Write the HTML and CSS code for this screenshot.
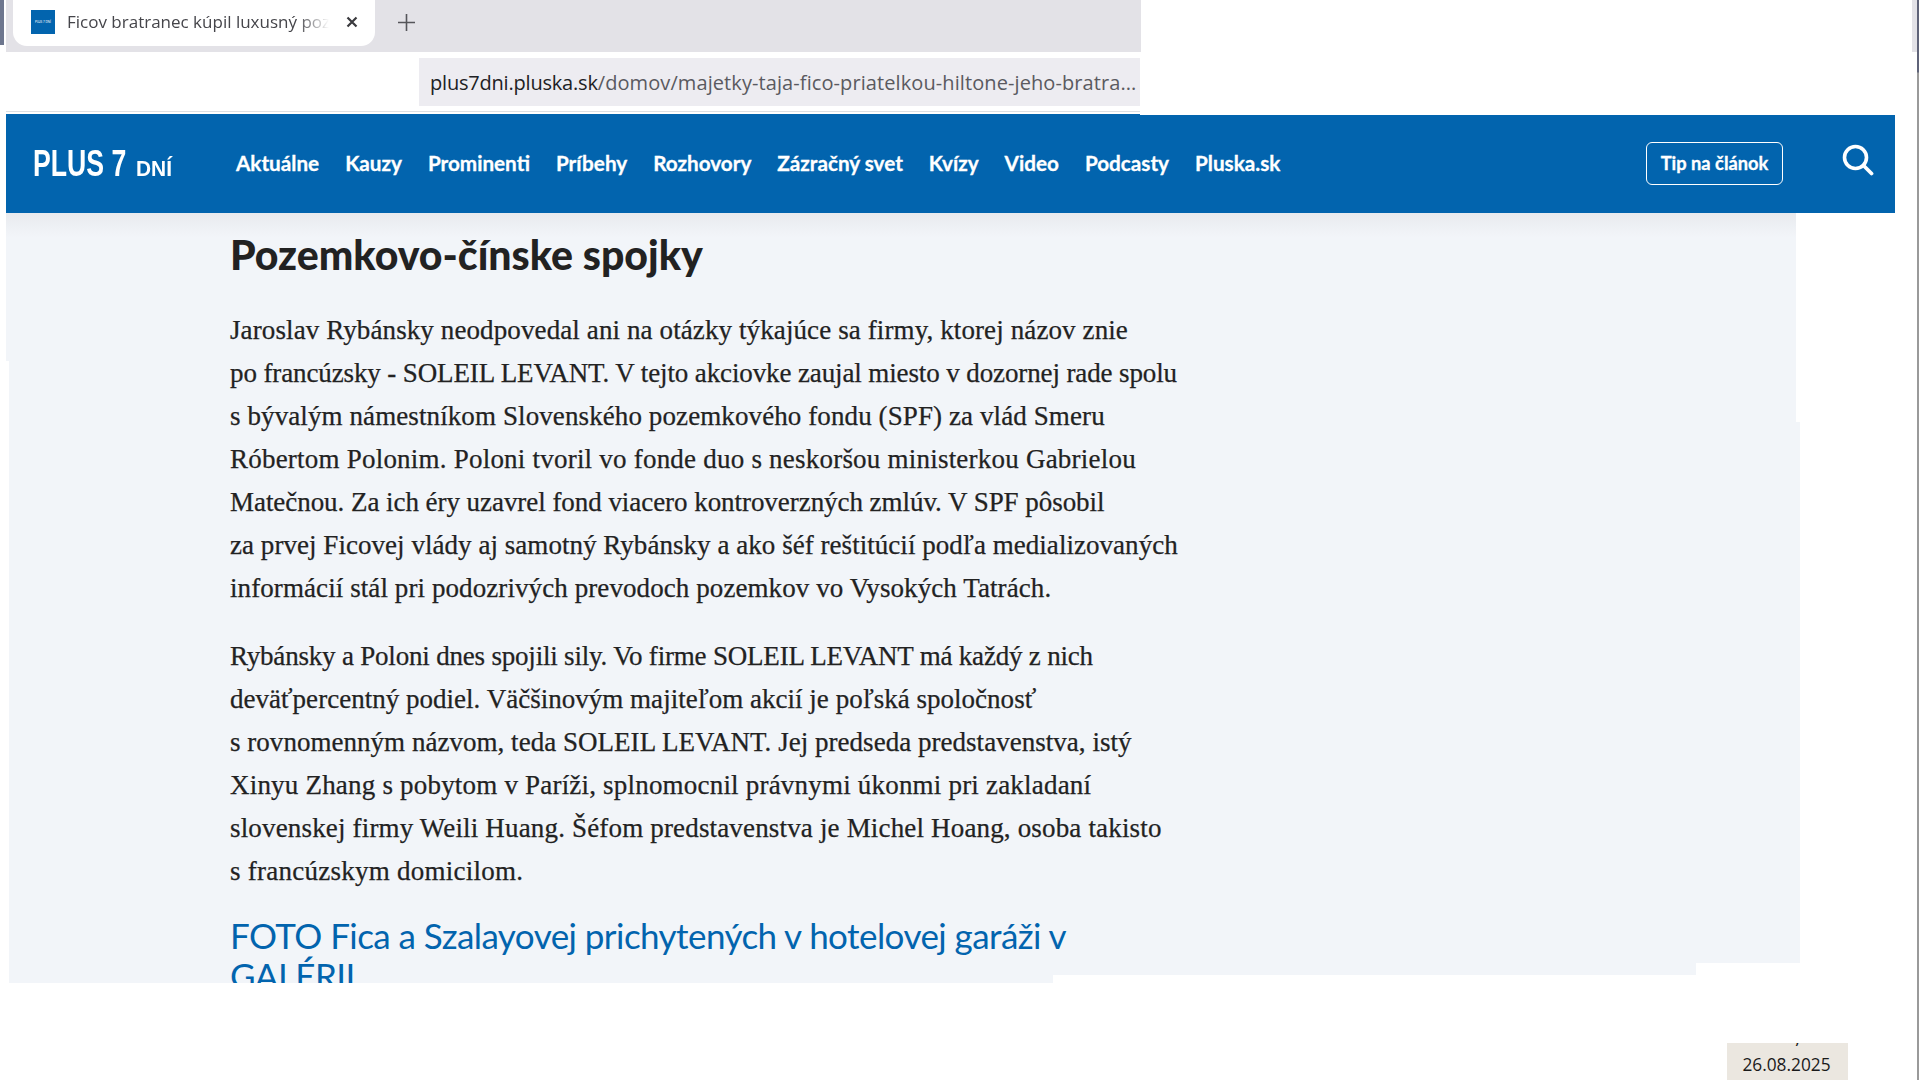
FILE: index.html
```html
<!DOCTYPE html>
<html lang="sk">
<head>
<meta charset="utf-8">
<title>Ficov bratranec kúpil luxusný pozemok</title>
<link rel="stylesheet" href="styles.css">
</head>
<body>
<div class="page">
  <div class="tabstrip">
    <div class="tab">
      <div class="favicon">PLUS 7 DNÍ</div>
      <div class="tab-title">Ficov bratranec kúpil luxusný pozemok</div>
      <svg class="tab-close" width="12" height="12" viewBox="0 0 12 12"><path d="M1.5 1.5l9 9M10.5 1.5l-9 9" fill="none" stroke="#3a3a3e" stroke-width="2.2"/></svg>
    </div>
    <svg class="tab-new" width="17" height="17" viewBox="0 0 17 17"><path d="M8.5 0v17M0 8.5h17" fill="none" stroke="#55555a" stroke-width="1.6"/></svg>
  </div>
  <div class="addressrow">
    <div class="addressbar"><span class="host">plus7dni.pluska.sk</span><span class="path">/domov/majetky-taja-fico-priatelkou-hiltone-jeho-bratra...</span></div>
  </div>
  <header class="siteheader">
    <div class="logo"><span class="logo-main">PLUS 7</span><span class="logo-sub">DNÍ</span></div>
    <nav class="nav">
      <a>Aktuálne</a><a>Kauzy</a><a>Prominenti</a><a>Príbehy</a><a>Rozhovory</a><a>Zázračný svet</a><a>Kvízy</a><a>Video</a><a>Podcasty</a><a>Pluska.sk</a>
    </nav>
    <a class="tip">Tip na článok</a>
    <svg class="search" width="32" height="32" viewBox="0 0 32 32"><circle cx="13.5" cy="13.5" r="11" fill="none" stroke="#fff" stroke-width="3.6"/><path d="M21.5 21.5l8 8" fill="none" stroke="#fff" stroke-width="3.8" stroke-linecap="round"/></svg>
  </header>
  <main class="panel">
    <article class="article">
      <h2 class="heading">Pozemkovo-čínske spojky</h2>
      <p class="para">
        <span class="line l1">Jaroslav Rybánsky neodpovedal ani na otázky týkajúce sa firmy, ktorej názov znie</span>
        <span class="line l2">po francúzsky - SOLEIL LEVANT. V tejto akciovke zaujal miesto v dozornej rade spolu</span>
        <span class="line l3">s bývalým námestníkom Slovenského pozemkového fondu (SPF) za vlád Smeru</span>
        <span class="line l4">Róbertom Polonim. Poloni tvoril vo fonde duo s neskoršou ministerkou Gabrielou</span>
        <span class="line l5">Matečnou. Za ich éry uzavrel fond viacero kontroverzných zmlúv. V SPF pôsobil</span>
        <span class="line l6">za prvej Ficovej vlády aj samotný Rybánsky a ako šéf reštitúcií podľa medializovaných</span>
        <span class="line l7">informácií stál pri podozrivých prevodoch pozemkov vo Vysokých Tatrách.</span>
      </p>
      <p class="para">
        <span class="line l8">Rybánsky a Poloni dnes spojili sily. Vo firme SOLEIL LEVANT má každý z nich</span>
        <span class="line l9">deväťpercentný podiel. Väčšinovým majiteľom akcií je poľská spoločnosť</span>
        <span class="line l10">s rovnomenným názvom, teda SOLEIL LEVANT. Jej predseda predstavenstva, istý</span>
        <span class="line l11">Xinyu Zhang s pobytom v Paríži, splnomocnil právnymi úkonmi pri zakladaní</span>
        <span class="line l12">slovenskej firmy Weili Huang. Šéfom predstavenstva je Michel Hoang, osoba takisto</span>
        <span class="line l13">s francúzskym domicilom.</span>
      </p>
      <a class="gallery">FOTO Fica a Szalayovej prichytených v hotelovej garáži v<br>GALÉRII</a>
    </article>
  </main>
  <div class="edge-left"></div>
  <div class="edge-tab"></div>
  <div class="edge-right"></div>
  <div class="datebox"><div class="date-cut">y</div><div>26.08.2025</div></div>
</div>
</body>
</html>
```
FILE: styles.css
```css
html, body { margin: 0; padding: 0; background: #fff; }
.page { position: relative; width: 1920px; height: 1080px; overflow: hidden; display: flex; flex-direction: column; font-family: "Lato", sans-serif; }
.tabstrip { margin-left: 6px; width: 1135px; height: 52px; flex: none; background: #e3e2e7; display: flex; align-items: flex-start; }
.tab { margin-left: 7px; width: 362px; height: 46px; background: #fff; border-radius: 0 0 14px 14px; display: flex; align-items: center; box-sizing: border-box; padding: 0 16px 2px 18px; }
.favicon { width: 24px; height: 24px; background: #0264ae; color: #fff; font-size: 3px; line-height: 24px; text-align: center; white-space: nowrap; flex: none; }
.tab-title { margin: 0 0 2px 12px; width: 262px; flex: none; overflow: hidden; white-space: nowrap; font-family: "Open Sans", sans-serif; font-size: 17px; color: #45454a; -webkit-mask-image: linear-gradient(90deg, #000 88%, transparent 100%); mask-image: linear-gradient(90deg, #000 88%, transparent 100%); }
.tab-close { margin-left: 17px; flex: none; }
.tab-new { margin: 14px 0 0 23px; flex: none; }
.addressrow { margin-left: 6px; width: 1134px; height: 60px; flex: none; box-sizing: border-box; padding-top: 6px; border-bottom: 1px solid #dcdfe3; }
.addressbar { margin-left: 413px; width: 721px; height: 48px; box-sizing: border-box; background: #edecf1; padding-left: 11px; font-family: "Open Sans", sans-serif; font-size: 20px; line-height: 50px; color: #5a5a60; white-space: nowrap; overflow: hidden; }
.host { color: #202124; letter-spacing: -0.2px; }
.path { letter-spacing: 0.09px; }
.siteheader { margin: 2px 0 0 6px; width: 1889px; height: 99px; flex: none; background: #0264ae; display: flex; align-items: center; color: #fff; clip-path: polygon(0 0, 1134px 0, 1134px 1px, 100% 1px, 100% 100%, 0 100%); }
.logo { margin-left: 27px; width: 203px; flex: none; display: flex; align-items: baseline; font-family: "Liberation Sans", sans-serif; white-space: nowrap; }
.logo-main { display: inline-block; width: 93px; font-size: 36px; font-weight: 700; transform: scaleX(0.74); transform-origin: 0 50%; }
.logo-sub { display: inline-block; font-size: 22px; font-weight: 700; margin-left: 10px; transform: scaleX(0.95); transform-origin: 0 50%; }
.nav { display: flex; gap: 26px; flex: 1; font-weight: 700; font-size: 20.7px; margin-bottom: 2px; -webkit-text-stroke: 0.3px #fff; }
.tip { width: 137px; height: 43px; flex: none; box-sizing: border-box; border: 1px solid #fff; border-radius: 6px; font-weight: 700; font-size: 18.3px; line-height: 41px; text-align: center; white-space: nowrap; -webkit-text-stroke: 0.3px #fff; }
.search { margin: 0 21px 8px 59px; flex: none; }
.panel { margin-left: 6px; width: 1794px; height: 770px; flex: none; overflow: hidden; background: linear-gradient(180deg, #e8eaee 0, #f2f5f9 24px); clip-path: polygon(0 0, 1790px 0, 1790px 209px, 1794px 209px, 1794px 750px, 1690px 750px, 1690px 762px, 1047px 762px, 1047px 770px, 3px 770px, 3px 148px, 0 148px); }
.article { margin-left: 224px; color: #222; }
.heading { margin: 0 0 28px; padding-top: 16px; font-weight: 900; font-size: 41px; line-height: 52px; color: #222; white-space: nowrap; }
.para { margin: 25px 0 0; font-family: "Liberation Serif", serif; font-size: 27px; line-height: 43px; white-space: nowrap; -webkit-text-stroke: 0.25px #222; }
.line { display: block; }
.l1 { letter-spacing: 0.107px; }
.l2 { letter-spacing: -0.118px; }
.l3 { letter-spacing: 0.1px; }
.l4 { letter-spacing: 0.22px; }
.l5 { letter-spacing: -0.05px; }
.l6 { letter-spacing: 0.043px; }
.l7 { letter-spacing: 0.086px; }
.l8 { letter-spacing: -0.196px; }
.l9 { letter-spacing: 0.02px; }
.l10 { letter-spacing: 0.03px; }
.l11 { letter-spacing: 0.2px; }
.l12 { letter-spacing: 0.166px; }
.l13 { letter-spacing: 0.25px; }
.gallery { display: block; margin-top: 22px; font-size: 35px; letter-spacing: -0.56px; line-height: 40px; color: #0264ae; white-space: nowrap; }
.edge-left { position: absolute; left: 0; top: 0; width: 4px; height: 45px; background: #6d768e; }
.edge-tab { position: absolute; left: 1912px; top: 0; width: 5px; height: 52px; background: #e3e2e7; }
.edge-right { position: absolute; left: 1917px; top: 0; width: 2px; height: 1080px; background: linear-gradient(180deg, #5f6378 0, #5f6378 72px, #9a9a9a 73px); }
.datebox { position: absolute; left: 1727px; top: 1043px; width: 121px; height: 37px; box-sizing: border-box; padding-right: 2px; overflow: hidden; background: #ebe7e0; font-family: "Open Sans", sans-serif; font-size: 17.3px; line-height: 38px; text-align: center; color: #1a1a1a; }
.date-cut { height: 3px; display: flex; align-items: flex-end; padding-left: 66px; overflow: hidden; line-height: 17px; }
```
